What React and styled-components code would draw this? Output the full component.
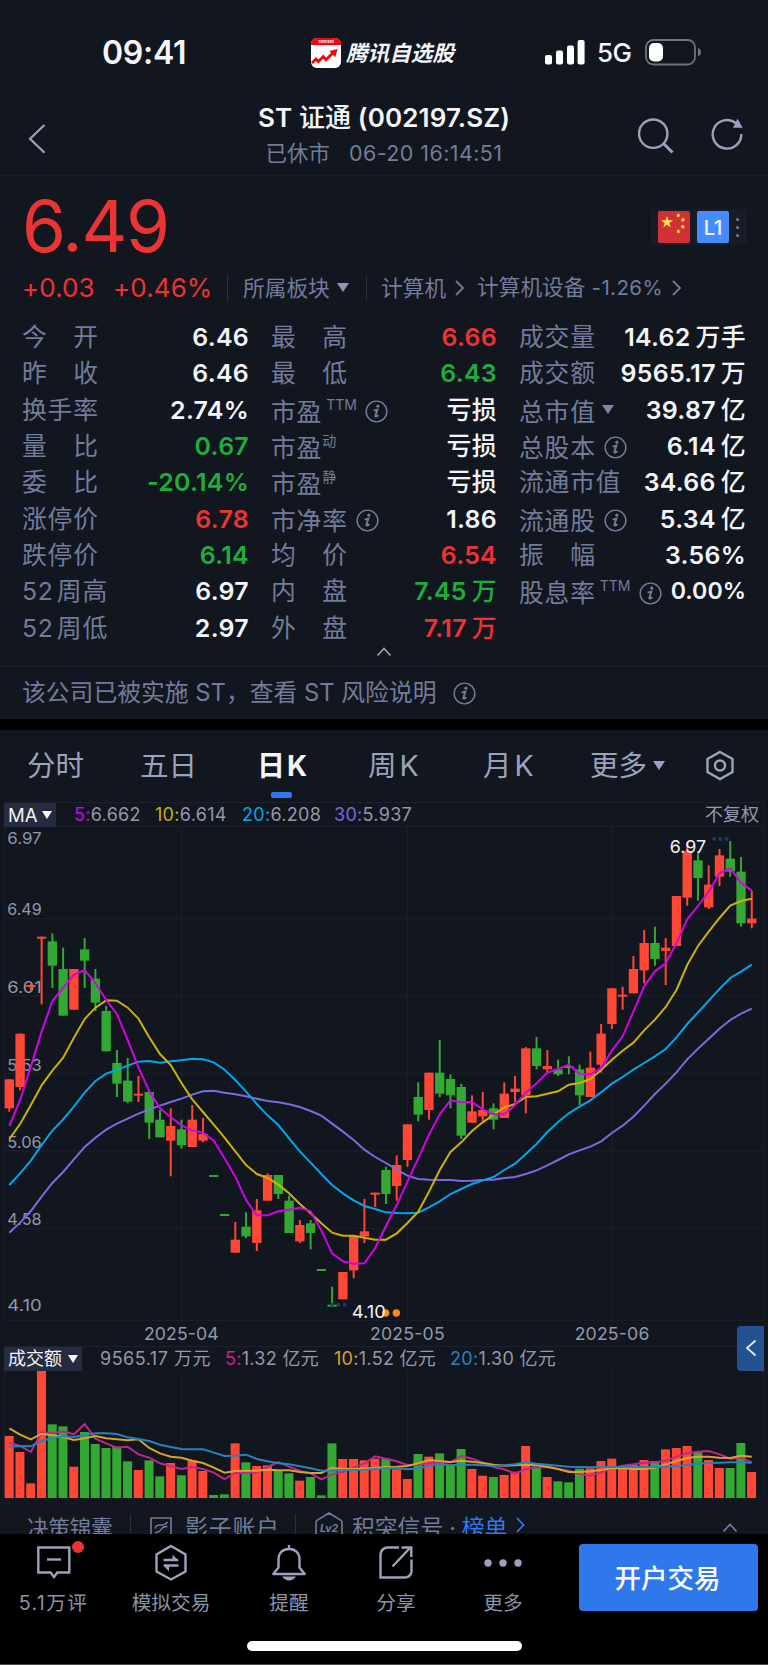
import React from 'react';
import styled, { createGlobalStyle } from 'styled-components';

const colors = {
  bg: '#12161e',
  label: '#727c9b',
  icon: '#9aa3bb',
  text: '#f3f5f9',
  up: '#ed3434',
  down: '#1fae3b',
  candleUp: '#ff4736',
  candleDown: '#33a833',
  line: '#1c212c',
  blue: '#2f78ec',
};

const tones = { up: colors.up, down: colors.down, flat: colors.text };

const stats = [
  [
    { label: '今　开', value: '6.46' },
    { label: '昨　收', value: '6.46' },
    { label: '换手率', value: '2.74%' },
    { label: '量　比', value: '0.67', tone: 'down' },
    { label: '委　比', value: '-20.14%', tone: 'down' },
    { label: '涨停价', value: '6.78', tone: 'up' },
    { label: '跌停价', value: '6.14', tone: 'down' },
    { label: '52\u200a周高', value: '6.97' },
    { label: '52\u200a周低', value: '2.97' },
  ],
  [
    { label: '最　高', value: '6.66', tone: 'up' },
    { label: '最　低', value: '6.43', tone: 'down' },
    { label: '市盈', sup: 'TTM', info: true, unit: '亏损' },
    { label: '市盈', sup: '动', unit: '亏损' },
    { label: '市盈', sup: '静', unit: '亏损' },
    { label: '市净率', info: true, value: '1.86' },
    { label: '均　价', value: '6.54', tone: 'up' },
    { label: '内　盘', value: '7.45', unit: '万', tone: 'down' },
    { label: '外　盘', value: '7.17', unit: '万', tone: 'up' },
  ],
  [
    { label: '成交量', value: '14.62', unit: '万手' },
    { label: '成交额', value: '9565.17', unit: '万' },
    { label: '总市值', caret: true, value: '39.87', unit: '亿' },
    { label: '总股本', info: true, value: '6.14', unit: '亿' },
    { label: '流通市值', value: '34.66', unit: '亿' },
    { label: '流通股', info: true, value: '5.34', unit: '亿' },
    { label: '振　幅', value: '3.56%' },
    { label: '股息率', sup: 'TTM', info: true, value: '0.00%', compact: true },
  ],
];

// [up, high, bodyTop, bodyBottom, low] in chart units
const candles = [
  [1, 778, 778, 865, 875], [1, 641, 641, 801, 811], [1, 492, 495, 499, 510], [1, 350, 350, 354, 553],
  [0, 340, 364, 437, 504], [0, 383, 447, 587, 587], [1, 447, 447, 569, 569], [0, 354, 388, 422, 504],
  [0, 447, 476, 548, 573], [0, 558, 573, 694, 694], [0, 690, 729, 791, 831], [0, 714, 782, 845, 850],
  [1, 768, 821, 825, 846], [0, 809, 816, 908, 957], [0, 870, 899, 952, 952], [1, 865, 918, 962, 1069],
  [0, 899, 928, 976, 986], [1, 855, 899, 981, 981], [1, 894, 942, 962, 967], [0, 1065, 1065, 1068, 1068],
  [0, 1182, 1182, 1185, 1185], [1, 1206, 1259, 1298, 1298], [0, 1177, 1220, 1249, 1254], [1, 1137, 1171, 1269, 1293],
  [1, 1060, 1065, 1142, 1142], [0, 1065, 1065, 1122, 1137], [0, 1127, 1142, 1239, 1239], [1, 1200, 1215, 1264, 1269],
  [0, 1200, 1210, 1239, 1288], [0, 1347, 1347, 1350, 1350], [0, 1400, 1454, 1457, 1457], [1, 1356, 1356, 1438, 1438],
  [1, 1249, 1249, 1351, 1375], [1, 1137, 1234, 1249, 1269], [1, 1118, 1118, 1121, 1161], [0, 1040, 1050, 1122, 1152],
  [1, 1006, 1035, 1098, 1142], [1, 913, 913, 1020, 1040], [0, 787, 831, 884, 904], [1, 758, 758, 870, 899],
  [0, 660, 758, 821, 831], [0, 763, 777, 826, 865], [0, 792, 801, 947, 957], [1, 826, 874, 908, 908],
  [1, 816, 870, 889, 904], [0, 850, 865, 899, 928], [1, 787, 821, 894, 894], [1, 768, 806, 816, 846],
  [1, 681, 685, 826, 880], [0, 651, 685, 738, 748], [1, 690, 738, 748, 758], [0, 719, 748, 763, 768],
  [0, 709, 738, 741, 763], [0, 734, 748, 826, 855], [1, 695, 743, 831, 831], [1, 612, 641, 734, 758],
  [1, 505, 505, 612, 627], [1, 500, 524, 528, 569], [1, 408, 447, 520, 520], [1, 330, 369, 451, 490],
  [0, 320, 369, 417, 437], [1, 354, 383, 393, 495], [1, 228, 228, 378, 378], [1, 70, 93, 233, 257],
  [0, 93, 121, 174, 242], [1, 136, 194, 262, 267], [1, 87, 106, 170, 198], [0, 63, 116, 155, 170],
  [0, 111, 155, 310, 320], [1, 213, 296, 310, 325],
];

const averages = [
  {
    name: '30', value: '5.937', color: '#7a6be0',
    data: [1238, 1208, 1173, 1130, 1089, 1056, 1018, 981, 953, 929, 911, 896, 881, 869, 857, 846, 836, 824, 814, 812, 818, 823, 829, 836, 843, 847, 853, 861, 873, 887, 911, 935, 960, 989, 1011, 1029, 1049, 1067, 1077, 1079, 1080, 1080, 1083, 1082, 1080, 1079, 1074, 1071, 1062, 1051, 1036, 1020, 1003, 991, 980, 964, 939, 917, 890, 857, 822, 791, 757, 718, 686, 656, 626, 600, 581, 566],
  },
  {
    name: '20', value: '6.208', color: '#05a5ec',
    data: [1095, 1060, 1022, 975, 932, 898, 860, 818, 783, 761, 750, 737, 725, 723, 728, 724, 721, 716, 718, 727, 749, 780, 815, 852, 886, 915, 955, 994, 1028, 1062, 1095, 1120, 1141, 1158, 1167, 1177, 1179, 1180, 1178, 1162, 1144, 1122, 1107, 1092, 1081, 1071, 1050, 1031, 1002, 972, 936, 906, 880, 860, 841, 817, 791, 771, 749, 729, 709, 687, 652, 612, 577, 542, 507, 474, 455, 434],
  },
  {
    name: '10', value: '6.614', color: '#cbb108',
    data: [957, 912, 855, 796, 752, 713, 653, 597, 563, 541, 542, 563, 596, 652, 702, 735, 789, 838, 876, 914, 953, 994, 1035, 1062, 1074, 1094, 1120, 1152, 1180, 1210, 1238, 1247, 1247, 1253, 1259, 1259, 1240, 1209, 1175, 1115, 1050, 996, 967, 933, 907, 884, 862, 852, 831, 829, 821, 814, 794, 789, 777, 750, 719, 692, 668, 631, 599, 561, 510, 435, 378, 335, 294, 257, 243, 236],
  },
  {
    name: '5', value: '6.662', color: '#cf05e6',
    data: [918, 840, 740, 635, 543, 504, 464, 450, 489, 540, 582, 660, 742, 813, 865, 891, 916, 931, 938, 962, 1015, 1070, 1140, 1186, 1186, 1174, 1169, 1163, 1174, 1232, 1300, 1324, 1331, 1330, 1284, 1218, 1155, 1085, 1016, 944, 883, 841, 847, 846, 868, 883, 883, 855, 818, 790, 758, 747, 734, 762, 763, 744, 692, 649, 575, 499, 454, 430, 370, 298, 258, 215, 160, 145, 188, 212],
  },
];

const volumes = [
  378, 426, 520, 181, 343, 349, 470, 366, 402, 414, 410, 454, 480, 451, 499, 459, 496, 451, 483, 555,
  553, 400, 457, 468, 466, 483, 490, 512, 501, 556, 400, 447, 447, 451, 446, 446, 478, 507, 432, 440,
  430, 465, 417, 477, 497, 501, 495, 485, 408, 469, 501, 514, 517, 476, 475, 453, 446, 475, 465, 450,
  453, 418, 414, 408, 427, 450, 474, 474, 399, 486,
];

const volumeAverages = [
  {
    name: '5', value: '1.32 亿元', color: '#c4248f',
    data: [398, 408, 426, 367, 370, 364, 373, 342, 386, 400, 413, 410, 433, 443, 460, 469, 477, 471, 477, 488, 507, 489, 489, 487, 471, 456, 470, 483, 490, 508, 493, 486, 472, 461, 439, 446, 454, 465, 464, 460, 458, 457, 438, 446, 458, 471, 478, 491, 478, 471, 472, 477, 482, 493, 497, 487, 475, 467, 463, 458, 457, 452, 440, 429, 425, 423, 433, 446, 444, 457],
  },
  {
    name: '10', value: '1.52 亿元', color: '#d8a32a',
    data: [355, 374, 388, 371, 376, 381, 390, 385, 378, 385, 388, 391, 388, 414, 430, 440, 443, 452, 459, 473, 488, 483, 482, 482, 479, 481, 481, 486, 489, 489, 473, 477, 477, 475, 474, 471, 470, 468, 460, 450, 453, 456, 452, 455, 459, 464, 467, 466, 464, 465, 470, 477, 486, 486, 484, 480, 475, 475, 477, 477, 473, 463, 453, 444, 440, 440, 443, 444, 437, 440],
  },
  {
    name: '20', value: '1.30 亿元', color: '#2583be',
    data: [410, 408, 409, 393, 384, 379, 381, 375, 370, 370, 372, 382, 387, 393, 404, 411, 417, 418, 418, 428, 438, 437, 434, 447, 454, 460, 463, 469, 475, 482, 482, 480, 480, 479, 477, 475, 475, 478, 475, 468, 463, 466, 464, 464, 466, 468, 466, 463, 457, 461, 464, 467, 470, 471, 472, 471, 471, 471, 471, 471, 471, 470, 469, 465, 461, 459, 458, 457, 457, 458],
  },
];

const priceTicks = [
  ['6.97', 71], ['6.49', 285], ['6.01', 519], ['5.53', 752], ['5.06', 984], ['4.58', 1216], ['4.10', 1472],
];
const months = [['2025-04', 544], ['2025-05', 1222], ['2025-06', 1836]];

const tabs = [
  { label: '分时', width: 113 },
  { label: '五日', width: 117 },
  { label: '日K', width: 111, active: true },
  { label: '周K', width: 115 },
  { label: '月K', width: 107 },
  { label: '更多', width: 113, caret: true },
];

const centerX = i => 28 + i * 32.28;
const toPoints = data => data.map((y, i) => `${centerX(i)},${y}`).join(' ');

const InfoIcon = () => (
  <InfoSvg viewBox="0 0 24 24">
    <circle cx="12" cy="12" r="10.8" fill="none" stroke="currentColor" strokeWidth="1.5" />
    <circle cx="13.4" cy="6.4" r="1.6" fill="currentColor" />
    <path
      d="M9 11.100 12.900 10 10.800 16.600Q10.600 18.400 14 15.900"
      fill="none"
      stroke="currentColor"
      strokeWidth="2"
    />
  </InfoSvg>
);

const Chevron = ({ width, height, stroke = 2, d }) => (
  <svg width={width} height={height} viewBox={`0 0 ${width} ${height}`}>
    <path d={d} fill="none" stroke="currentColor" strokeWidth={stroke} />
  </svg>
);

const StatusBar = () => (
  <Status>
    <Clock>09:41</Clock>
    <Brand>
      <svg width="30" height="30" viewBox="0 0 30 30">
        <rect width="30" height="30" rx="6" fill="#fff" />
        <path d="M0 7V6a6 6 0 0 1 6-6h18a6 6 0 0 1 6 6v1z" fill="#f5040b" />
        <text x="15" y="5.4" textAnchor="middle" fontSize="4" fontWeight="700" fill="#fff" fontFamily="Inter, sans-serif">
          Tencent
        </text>
        <path d="m1 25 4-4 2.3 2.4 5-4.9 2.6 3.2 7.5-7.2" fill="none" stroke="#f5040b" strokeWidth="2.8" />
        <path d="m18.3 13 8.4-2-2.5 8.2z" fill="#f5040b" />
      </svg>
      <BrandName>腾讯自选股</BrandName>
    </Brand>
    <Signal>
      <svg width="40" height="25" viewBox="0 0 40 25" fill="#fff">
        <rect x="0" y="15" width="7" height="9.5" rx="2" />
        <rect x="11" y="10.5" width="7" height="14" rx="2" />
        <rect x="22" y="5.5" width="7" height="19" rx="2" />
        <rect x="32.6" y="0" width="7" height="24.5" rx="2" />
      </svg>
      <Network>5G</Network>
      <svg width="57" height="27" viewBox="0 0 57 27">
        <rect x="1" y="1" width="49" height="24.5" rx="7.5" fill="none" stroke="#71747a" strokeWidth="1.8" />
        <rect x="4" y="4" width="14" height="18.5" rx="5" fill="#fff" />
        <path d="M53 9c4 1.500 4 7 0 8.500z" fill="#71747a" />
      </svg>
    </Signal>
  </Status>
);

const Header = () => (
  <Head>
    <Back>
      <Chevron width={18} height={31} stroke={2.2} d="M16.500 1 2 14.700l14.500 14" />
    </Back>
    <Titles>
      <Title>
        ST <span>证通</span> (002197.SZ)
      </Title>
      <Subtitle>
        <span>已休市</span>
        <Time>06-20 16:14:51</Time>
      </Subtitle>
    </Titles>
    <Actions>
      <svg width="37" height="36" viewBox="0 0 37 36" fill="none" stroke="currentColor" strokeWidth="2.4">
        <circle cx="15.200" cy="15.700" r="14.200" />
        <path d="m25.500 25.500 9 9" strokeWidth="3" />
      </svg>
      <svg width="34" height="34" viewBox="0 0 34 34" fill="none" stroke="currentColor" strokeWidth="2.400">
        <path d="M25 5.200A14.300 14.300 0 1 0 30.300 16" />
        <path d="m26.500.8 5.200 8.900H22z" fill="currentColor" stroke="none" />
      </svg>
    </Actions>
  </Head>
);

const Flag = () => (
  <svg width="32" height="32" viewBox="0 0 32 32">
    <rect width="32" height="32" rx="2" fill="#d03036" />
    <g fill="#ffe13b">
      <path d="m9 5 1.500 4.200 4.500.1-3.600 2.800 1.300 4.300L9 13.800l-3.700 2.600 1.300-4.300L3 9.300l4.500-.1z" />
      <path d="m20.500 2 .6 1.500 1.500.4-1.300 1 .1 1.600-1.300-.9-1.500.5.500-1.500-1-1.200 1.600-.1z" />
      <path d="m25.500 6.500.3 1.600 1.500.6-1.400.8-.1 1.600-1.200-1.100-1.600.4.700-1.400-.9-1.400 1.600.2z" />
      <path d="m25.300 13.500.4 1.600 1.500.5-1.400.8v1.600l-1.200-1-1.600.4.600-1.500-.8-1.400 1.600.1z" />
      <path d="m20.500 18 .6 1.500 1.600.3-1.300 1 .2 1.600-1.400-.9-1.500.6.500-1.600-1-1.200 1.600-.1z" />
    </g>
  </svg>
);

const Quote = () => (
  <QuoteBox>
    <PriceRow>
      <Price>6.49</Price>
      <Badges>
        <Flag />
        <Level>L1</Level>
        <Dots>
          <i />
          <i />
          <i />
        </Dots>
      </Badges>
    </PriceRow>
    <SectorRow>
      <Change>+0.03</Change>
      <Change>+0.46%</Change>
      <Bar />
      <Sector>
        所属板块
        <Caret $size={6} $color="#8e97b0" />
      </Sector>
      <Bar />
      <Sector $gap={9}>
        计算机
        <Chevron width={10} height={16} d="m1 1 7 7-7 7" stroke={1.8} />
      </Sector>
      <Sector $gap={9}>
        <span>
          计算机设备 <small>-1.26%</small>
        </span>
        <Chevron width={10} height={16} d="m1 1 7 7-7 7" stroke={1.8} />
      </Sector>
    </SectorRow>
  </QuoteBox>
);

const Stat = ({ label, sup, info, caret, value, unit, compact, tone = 'flat' }) => (
  <StatRow>
    <StatLabel $low={sup || info || caret}>
      {label}
      {sup && <Sup $latin={sup === 'TTM'}>{sup}</Sup>}
      {info && <InfoIcon />}
      {caret && <Caret $size={6} $color="#7e88a4" />}
    </StatLabel>
    <StatValue $tone={tone} $compact={compact}>
      {value}
      {unit && <Unit>{unit}</Unit>}
    </StatValue>
  </StatRow>
);

const PriceChart = () => (
  <svg width="768" height="520" viewBox="0 18 2304 1560" fontFamily={fontStack}>
    <g stroke={colors.line} strokeWidth="3" fill="none">
      <path d="M13 19.500H2291M13 295H2291M13 527H2291M13 760H2291M13 993H2291M13 1225H2291M13 1501H2291" />
      <path d="M14 18V1501M2291 18V1501M544 18V1501M1222 18V1501M1836 18V1501" />
    </g>
    <g fontSize="48" fill="#9299ab">
      {priceTicks.map(([label, y]) => (
        <text key={label} x="22" y={y} textLength="103" lengthAdjust="spacingAndGlyphs">
          {label}
        </text>
      ))}
    </g>
    {candles.map(([up, high, top, bottom, low], i) => (
      <g key={i} fill={up ? colors.candleUp : colors.candleDown}>
        <rect x={centerX(i) - 3} y={high} width="6" height={low - high} />
        <rect x={centerX(i) - 14} y={top} width="28" height={Math.max(bottom - top, 6)} />
      </g>
    ))}
    {averages.map(({ name, color, data }) => (
      <polyline key={name} points={toPoints(data)} fill="none" stroke={color} strokeWidth="6" />
    ))}
    <g fill="#1f3a63">
      {[2142, 2161, 2180].map(x => <circle key={x} cx={x} cy="57" r="6" />)}
      {[996, 1015, 1034].map(x => <circle key={x} cx={x} cy="1454" r="5.500" />)}
    </g>
    <circle cx="1157" cy="1479" r="11" fill="#ff8a1c" />
    <circle cx="1189" cy="1479" r="11" fill="#ff8a1c" />
    <g fontSize="52" fill="#f0f2f6">
      <text x="2009" y="98" textLength="109" lengthAdjust="spacingAndGlyphs">6.97</text>
      <text x="1055" y="1495" textLength="103" lengthAdjust="spacingAndGlyphs">4.10</text>
    </g>
    <g fontSize="53" fill="#9299ab" textAnchor="middle">
      {months.map(([label, x]) => (
        <text key={label} x={x} y="1561" textLength="224">{label}</text>
      ))}
    </g>
  </svg>
);

const VolumeChart = () => (
  <svg width="768" height="128" viewBox="0 180 2304 384">
    <g stroke={colors.line} strokeWidth="3" fill="none">
      <path d="M14 180V563H2292M2291 180V563M544 180V563M1222 180V563M1836 180V563" />
    </g>
    {volumes.map((y, i) => (
      <rect
        key={i}
        x={centerX(i) - 14}
        y={y}
        width="27"
        height={564 - y}
        fill={candles[i][0] ? colors.candleUp : colors.candleDown}
      />
    ))}
    {volumeAverages.map(({ name, color, data }) => (
      <polyline key={name} points={toPoints(data)} fill="none" stroke={color} strokeWidth="6" />
    ))}
  </svg>
);

const NavIcon = ({ children }) => (
  <svg width="40" height="40" viewBox="0 0 40 40" fill="none" stroke={colors.icon} strokeWidth="2.400">
    {children}
  </svg>
);

const Navigation = () => (
  <Nav>
    <NavItem $width={107}>
      <NavIcon>
        <path d="M4.300 6.500h31v25h-12L20 36l-3.500-4.500H4.300z" />
        <path d="M13 18.500h14" />
      </NavIcon>
      <NavText $spacing={1.3}>5.1万评</NavText>
      <RedDot />
    </NavItem>
    <NavItem $width={128}>
      <NavIcon>
        <path d="m20 5 14.500 8.500v17L20 38.500 5.500 30.500v-17z" />
        <path d="M12.500 19h14.500M13 24.500h14.500" />
        <path d="m21.500 13.500 6.300 6.500h-6.300zM18 30.500 12 24h6z" fill={colors.icon} stroke="none" />
      </NavIcon>
      <NavText>模拟交易</NavText>
    </NavItem>
    <NavItem $width={108}>
      <NavIcon>
        <path d="M20 4v4M20 8c-7 0-10.500 4.500-10.500 10.500v8L4.300 33h31.400l-5.200-6.500v-8C30.500 12.500 27 8 20 8z" strokeLinejoin="round" />
        <path d="M13 35.500h14q-3 4-7 4t-7-4z" fill={colors.icon} stroke="none" />
      </NavIcon>
      <NavText>提醒</NavText>
    </NavItem>
    <NavItem $width={106}>
      <NavIcon>
        <path d="M23 6.500H11q-6 1-6.500 7V36.500h25q5-.5 6-6V18.500" />
        <path d="m16.500 25.500 17-18M25.500 6.500h9.800v9.500" />
      </NavIcon>
      <NavText>分享</NavText>
    </NavItem>
    <NavItem $width={108}>
      <NavIcon>
        <g fill={colors.icon} stroke="none">
          <circle cx="5" cy="22" r="3.700" />
          <circle cx="20" cy="22" r="3.700" />
          <circle cx="35" cy="22" r="3.700" />
        </g>
      </NavIcon>
      <NavText>更多</NavText>
    </NavItem>
    <OpenButton>开户交易</OpenButton>
  </Nav>
);

export default function App() {
  return (
    <Page>
      <GlobalStyle />
      <StatusBar />
      <Header />
      <Quote />
      <Stats>
        {stats.map((column, i) => (
          <StatColumn key={i}>
            {column.map(item => <Stat key={item.label + (item.sup || '')} {...item} />)}
          </StatColumn>
        ))}
      </Stats>
      <Collapse>
        <Chevron width={16} height={10} d="m1.500 8.500 6.500-7 6.500 7" stroke={1.600} />
      </Collapse>
      <Notice>
        <NoticeText>该公司已被实施 ST，查看 ST 风险说明</NoticeText>
        <InfoIcon />
      </Notice>

      <Tabs>
        {tabs.map(({ label, width, active, caret }) => (
          <Tab key={label} $active={active} $width={width}>
            <TabText $active={active}>
              {label[0]}
              {label[1] === 'K' ? <span>K</span> : label[1]}
            </TabText>
            {caret && <Caret $size={6} $color={colors.icon} />}
          </Tab>
        ))}
        <svg width="34" height="34" viewBox="0 0 34 34" fill="none" stroke={colors.icon} strokeWidth="2.400">
          <path d="m17 4 12.500 7v13L17 31 4.500 24V11z" />
          <circle cx="17" cy="17.500" r="5" />
        </svg>
      </Tabs>

      <IndicatorBar>
        <Picker $width={52}>
          <PickerText $latin>MA</PickerText>
          <Caret $size={5.5} $color="#fff" />
        </Picker>
        <Readings $columns="81px 87px 92px 90px">
          {[...averages].reverse().map(({ name, value, color }) => (
            <Reading key={name} $color={color}>
              <b>{name}:</b>
              {value}
            </Reading>
          ))}
        </Readings>
        <Adjust>不复权</Adjust>
      </IndicatorBar>
      <PriceChart />
      <IndicatorBar>
        <Picker $width={78}>
          <PickerText>成交额</PickerText>
          <Caret $size={5.5} $color="#fff" />
        </Picker>
        <Readings $columns="125px 109px 116px 110px">
          <Reading $spacing={0.5}>9565.17 万元</Reading>
          {volumeAverages.map(({ name, value, color }) => (
            <Reading key={name} $color={color}>
              <b>{name}:</b>
              {value}
            </Reading>
          ))}
        </Readings>
        <SideHandle>
          <Chevron width={12} height={18} d="m10.500.5-8.500 7.500 8.500 7.500" stroke={1.800} />
        </SideHandle>
      </IndicatorBar>
      <VolumeChart />

      <Strip>
        <StripCell $width={103} $size={21.4}>决策锦囊</StripCell>
        <StripBar />
        <StripCell $width={145} $size={22.8} $spacing={0.9}>
          <svg width="22" height="24" viewBox="0 0 22 24" fill="none" stroke="currentColor" strokeWidth="1.600">
            <path d="M1 1h20v22H1z" />
            <path d="M5 11.500q1-4 5.500-3.500T17.500 5M5 15.500q4 .5 6-3t6.500-3" strokeWidth="1.400" />
          </svg>
          影子账户
        </StripCell>
        <StripBar />
        <StripCell $width={300} $size={22.8} $gap={9}>
          <Lv2Icon width="28" height="30" viewBox="0 0 28 30" fill="none" stroke="currentColor" strokeWidth="1.600">
            <path d="M1 30V10.500Q1 9 2 8.300L14 1l12 7.300q1 .7 1 2.200V30z" />
            <text x="14" y="19.500" textAnchor="middle" fill="currentColor" stroke="none" fontSize="10.500" fontStyle="italic" fontWeight="700" fontFamily="Inter, sans-serif">
              Lv2
            </text>
          </Lv2Icon>
          <span>
            积突信号<Point>·</Point>
            <Link>榜单</Link>
          </span>
          <Link>
            <Chevron width={9} height={16} d="m1 1 6.500 7-6.500 7" stroke={1.800} />
          </Link>
        </StripCell>
        <Chevron width={16} height={10} d="m1.500 8.500 6.500-7 6.500 7" stroke={1.800} />
      </Strip>

      <Bottom>
        <Navigation />
        <HomeIndicator />
      </Bottom>
    </Page>
  );
}

const fontStack = "Inter, 'Noto Sans CJK SC', sans-serif";

const GlobalStyle = createGlobalStyle`
  body {
    margin: 0;
    background: ${colors.bg};
  }
  * {
    box-sizing: border-box;
  }
  svg {
    display: block;
    flex: none;
  }
`;

const Page = styled.div`
  width: 768px;
  height: 1665px;
  overflow: hidden;
  background: ${colors.bg};
  color: ${colors.text};
  font-family: ${fontStack};
  white-space: nowrap;
`;

const Status = styled.div`
  display: grid;
  grid-template-columns: 208px 234px 1fr;
  align-items: center;
  height: 87px;
  padding: 18px 0 0 103px;
`;

const Clock = styled.div`
  margin-left: -1px;
  font-size: 32px;
  font-weight: 600;
  letter-spacing: -0.3px;
`;

const Brand = styled.div`
  display: flex;
  align-items: center;
  gap: 5px;
`;

const BrandName = styled.span`
  font-size: 21.6px;
  line-height: 28px;
  font-weight: 700;
  font-style: italic;
`;

const Signal = styled.div`
  display: flex;
  align-items: center;
`;

const Network = styled.span`
  margin: 0 13px 0 12px;
  font-size: 26px;
  font-weight: 500;
  letter-spacing: -0.5px;
`;

const Head = styled.header`
  display: grid;
  grid-template-columns: 230px 308px 1fr;
  height: 89px;
  border-bottom: 1px solid #191d27;
`;

const Back = styled.div`
  padding: 37px 0 0 28px;
  color: ${colors.icon};
`;

const Titles = styled.div`
  display: flex;
  flex-direction: column;
  align-items: center;
  padding-top: 13px;
`;

const Title = styled.div`
  font-size: 26px;
  line-height: 36px;
  font-weight: 600;
  letter-spacing: 0.12px;

  span {
    font-weight: 500;
  }
`;

const Subtitle = styled.div`
  display: flex;
  gap: 19px;
  margin-top: -1px;
  font-size: 21.5px;
  line-height: 36px;
  color: ${colors.label};
`;

const Time = styled.span`
  letter-spacing: 0.4px;
`;

const Actions = styled.div`
  display: flex;
  gap: 36px;
  padding: 31px 0 0 100px;
  color: ${colors.icon};
`;

const QuoteBox = styled.section`
  height: 143px;
  padding: 15px 21px 0 22px;
`;

const PriceRow = styled.div`
  display: flex;
  justify-content: space-between;
  height: 78px;
`;

const Price = styled.div`
  font-size: 71px;
  line-height: 70px;
  letter-spacing: -1.3px;
  color: ${colors.up};
`;

const Badges = styled.div`
  display: flex;
  align-items: center;
  width: 96px;
  height: 36px;
  margin-top: 18px;
  padding-left: 7px;
  gap: 7px;
  background: #171c27;
`;

const Level = styled.div`
  width: 32px;
  height: 32px;
  border-radius: 2px;
  background: #458bff;
  font-size: 20px;
  line-height: 34px;
  font-weight: 500;
  text-align: center;
`;

const Dots = styled.div`
  display: flex;
  flex-direction: column;
  gap: 5px;

  i {
    width: 3px;
    height: 3px;
    border-radius: 50%;
    background: #7b8090;
  }
`;

const SectorRow = styled.div`
  display: grid;
  grid-template-columns: 91px 114px 16px 123px 15px 96px 1fr;
  align-items: center;
  height: 36px;
`;

const Change = styled.div`
  font-size: 26px;
  letter-spacing: 0.1px;
  color: ${colors.up};
`;

const Bar = styled.div`
  width: 1px;
  height: 24px;
  background: #2b3140;
`;

const Sector = styled.div`
  display: flex;
  align-items: center;
  gap: ${p => p.$gap || 7}px;
  font-size: 21.7px;
  line-height: 36px;
  color: ${colors.label};

  small {
    font-size: 20.5px;
    letter-spacing: 0.4px;
  }
`;

const Caret = styled.i`
  width: 0;
  height: 0;
  border: ${p => p.$size}px solid transparent;
  border-top: ${p => p.$size * 1.5}px solid ${p => p.$color};
  border-bottom: 0;
`;

const Stats = styled.section`
  display: grid;
  grid-template-columns: 227px 226px 227px;
  gap: 22px;
  height: 327px;
  padding-left: 22px;
`;

const StatColumn = styled.div`
  display: grid;
  grid-template-rows: repeat(9, 1fr);
`;

const StatRow = styled.div`
  display: flex;
  align-items: center;
  justify-content: space-between;
  height: 36px;
  line-height: 36px;
`;

const StatLabel = styled.div`
  display: flex;
  align-items: center;
  padding-top: ${p => (p.$low ? '4px' : '0')};
  font-size: 24.8px;
  letter-spacing: 0.8px;
  color: ${colors.label};

  ${Caret} {
    margin: 0 0 5px 6px;
  }
`;

const InfoSvg = styled.svg`
  width: 23px;
  height: 23px;
  margin-left: 8px;
  color: ${colors.label};
`;

const Sup = styled.span`
  align-self: flex-start;
  margin-left: ${p => (p.$latin ? 4 : 0)}px;
  font-size: 14px;
  line-height: 22px;
  letter-spacing: 0;
`;

const StatValue = styled.div`
  display: flex;
  font-size: ${p => (p.$compact ? 23.2 : 24.9)}px;
  font-weight: 600;
  letter-spacing: ${p => (p.$compact ? 0 : 0.3)}px;
  color: ${p => tones[p.$tone]};
`;

const Unit = styled.span`
  margin-left: 5px;
  font-weight: 500;
`;

const Collapse = styled.div`
  display: flex;
  justify-content: center;
  height: 20px;
  padding-top: 1px;
  color: ${colors.icon};
`;

const Notice = styled.section`
  display: flex;
  align-items: center;
  gap: 8px;
  height: 64px;
  padding-left: 22px;
  border-top: 1px solid ${colors.line};
  border-bottom: 11px solid #000;
`;

const NoticeText = styled.span`
  font-size: 23.8px;
  line-height: 36px;
  color: ${colors.label};
`;

const Tabs = styled.nav`
  display: flex;
  align-items: center;
  height: 72px;
  padding: 0 0 2px 27px;
`;

const Tab = styled.div`
  position: relative;
  display: flex;
  align-items: center;
  gap: 6px;
  width: ${p => p.$width}px;
  height: 70px;

  ${p => p.$active && `
    &::after {
      content: '';
      position: absolute;
      left: 14px;
      bottom: 2px;
      width: 21px;
      height: 6px;
      border-radius: 2px;
      background: ${colors.blue};
    }
  `}
`;

const TabText = styled.span`
  padding-top: 2px;
  font-size: ${p => (p.$active ? 28 : 28.5)}px;
  line-height: 40px;
  font-weight: ${p => (p.$active ? 700 : 400)};
  color: ${p => (p.$active ? colors.text : colors.icon)};

  span {
    margin-left: ${p => (p.$active ? 2 : 3)}px;
  }
`;

const IndicatorBar = styled.div`
  position: relative;
  display: flex;
  align-items: center;
  height: 24px;
  margin: 0 4px;
  border: 1px solid ${colors.line};
  border-bottom: 0;
`;

const Picker = styled.div`
  display: flex;
  align-items: center;
  justify-content: space-between;
  width: ${p => p.$width}px;
  height: 24px;
  margin-left: -1px;
  padding: 0 4px;
  background: #262c3f;
`;

const PickerText = styled.span`
  font-size: ${p => (p.$latin ? 18.5 : 18)}px;
  line-height: 24px;
`;

const Readings = styled.div`
  display: grid;
  flex: 1;
  grid-template-columns: ${p => p.$columns};
  padding-left: 18px;
`;

const Reading = styled.span`
  font-size: 18px;
  line-height: 24px;
  letter-spacing: ${p => p.$spacing || 0.3}px;
  color: #9299ab;

  b {
    font-weight: 400;
    color: ${p => p.$color};
  }
`;

const Adjust = styled.span`
  padding-right: 4px;
  font-size: 18px;
  line-height: 24px;
  color: #9299ab;
`;

const SideHandle = styled.div`
  position: absolute;
  right: -1px;
  top: -21px;
  display: flex;
  align-items: center;
  justify-content: center;
  width: 27px;
  height: 45px;
  border-radius: 4px 0 0 4px;
  background: #22528f;
  color: #e4ecf8;
`;

const Strip = styled.div`
  display: flex;
  align-items: flex-start;
  height: 36px;
  padding: 16px 0 0 27px;
  overflow: hidden;
  color: ${colors.label};

  & > svg {
    margin: 9px 0 0 107px;
  }
`;

const StripCell = styled.div`
  display: flex;
  align-items: flex-start;
  gap: ${p => p.$gap || 13}px;
  width: ${p => p.$width}px;
  font-size: ${p => p.$size}px;
  line-height: 28px;
  letter-spacing: ${p => p.$spacing || 0}px;

  svg {
    margin-top: 3px;
  }
`;

const StripBar = styled.div`
  width: 1px;
  height: 20px;
  margin-right: 19px;
  background: #2b3140;
`;

const Lv2Icon = styled.svg`
  && {
    margin-top: -2px;
  }
`;

const Point = styled.span`
  margin: 0 6px;
`;

const Link = styled.span`
  color: ${colors.blue};
`;

const Bottom = styled.footer`
  display: flex;
  flex-direction: column;
  align-items: center;
  justify-content: space-between;
  height: 131px;
  border-bottom: 1px solid #4a4a4a;
  background: #000;
`;

const Nav = styled.div`
  display: flex;
  width: 768px;
`;

const NavItem = styled.div`
  position: relative;
  display: flex;
  flex-direction: column;
  align-items: center;
  width: ${p => p.$width}px;
  padding-top: 7px;
`;

const NavText = styled.span`
  margin-top: 8px;
  font-size: 19.7px;
  line-height: 28px;
  letter-spacing: ${p => p.$spacing || 0}px;
  color: #8b93a9;
`;

const RedDot = styled.i`
  position: absolute;
  left: 72px;
  top: 7px;
  width: 12px;
  height: 12px;
  border-radius: 50%;
  background: #e73535;
`;

const OpenButton = styled.button`
  width: 179px;
  height: 67px;
  margin: 10px 0 0 22px;
  padding: 0 2px 3px 0;
  border: 0;
  border-radius: 4px;
  background: ${colors.blue};
  color: #fff;
  font-family: ${fontStack};
  font-size: 26.5px;
  font-weight: 500;
`;

const HomeIndicator = styled.div`
  width: 275px;
  height: 10px;
  margin-bottom: 13px;
  border-radius: 5px;
  background: #fff;
`;
